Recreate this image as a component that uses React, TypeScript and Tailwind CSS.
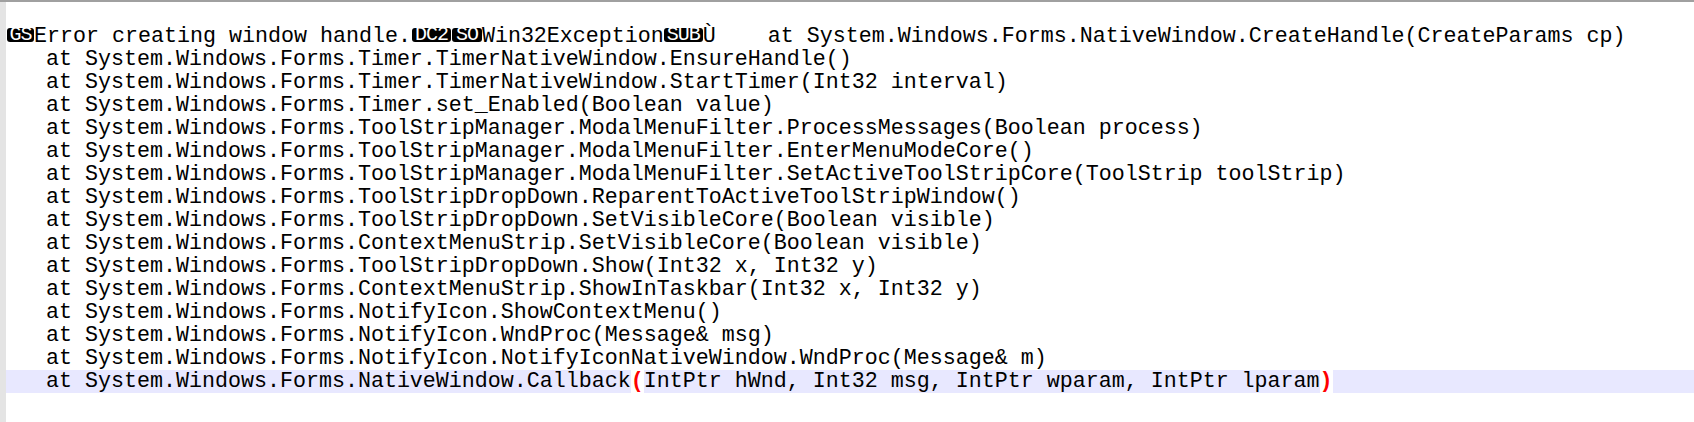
import React from 'react';

// Notepad++ style view of a .NET stack trace
const mono = { fontFamily: '"Liberation Mono", "Courier New", monospace' };

const lines = [
  '   at System.Windows.Forms.Timer.TimerNativeWindow.EnsureHandle()',
  '   at System.Windows.Forms.Timer.TimerNativeWindow.StartTimer(Int32 interval)',
  '   at System.Windows.Forms.Timer.set_Enabled(Boolean value)',
  '   at System.Windows.Forms.ToolStripManager.ModalMenuFilter.ProcessMessages(Boolean process)',
  '   at System.Windows.Forms.ToolStripManager.ModalMenuFilter.EnterMenuModeCore()',
  '   at System.Windows.Forms.ToolStripManager.ModalMenuFilter.SetActiveToolStripCore(ToolStrip toolStrip)',
  '   at System.Windows.Forms.ToolStripDropDown.ReparentToActiveToolStripWindow()',
  '   at System.Windows.Forms.ToolStripDropDown.SetVisibleCore(Boolean visible)',
  '   at System.Windows.Forms.ContextMenuStrip.SetVisibleCore(Boolean visible)',
  '   at System.Windows.Forms.ToolStripDropDown.Show(Int32 x, Int32 y)',
  '   at System.Windows.Forms.ContextMenuStrip.ShowInTaskbar(Int32 x, Int32 y)',
  '   at System.Windows.Forms.NotifyIcon.ShowContextMenu()',
  '   at System.Windows.Forms.NotifyIcon.WndProc(Message& msg)',
  '   at System.Windows.Forms.NotifyIcon.NotifyIconNativeWindow.WndProc(Message& m)',
];

const App = () => {
  return (
    <div className="h-[422px] w-full overflow-hidden bg-white border-t-2 border-[#a0a0a0] flex">
      <div className="w-[6px] shrink-0 bg-[#e4e4e4]" />
      <div
        className="flex-1 pt-[23px] text-[21.66px] leading-[23px] text-black whitespace-pre"
        style={mono}
      >
        <div className="h-[23px] pl-[1px]">
          <span className="inline-block align-top mt-[3px] w-[27px] h-[14px] leading-[14px] text-[20px] tracking-[-1px] text-white bg-black rounded-[3px] text-center">GS</span>
          Error creating window handle.
          <span className="inline-block align-top mt-[3px] ml-[1px] w-[39px] h-[14px] leading-[14px] text-[20px] tracking-[-1px] text-white bg-black rounded-[3px] text-center">DC2</span>
          <span className="inline-block align-top mt-[3px] ml-[1px] w-[30px] h-[14px] leading-[14px] text-[20px] tracking-[-1px] text-white bg-black rounded-[3px] text-center">SO</span>
          Win32Exception
          <span className="inline-block align-top mt-[3px] w-[39px] h-[14px] leading-[14px] text-[20px] tracking-[-1px] text-white bg-black rounded-[3px] text-center">SUB</span>
          {'Ù    at System.Windows.Forms.NativeWindow.CreateHandle(CreateParams cp)'}
        </div>
        {lines.map((line, i) => (
          <div key={i} className="h-[23px] pl-[1px]">
            {line}
          </div>
        ))}
        <div className="h-[23px] pl-[1px] bg-[#e8e8ff]">
          {'   at System.Windows.Forms.NativeWindow.Callback'}
          <span className="bg-white text-[#ff0000] font-bold">(</span>
          IntPtr hWnd, Int32 msg, IntPtr wparam, IntPtr lparam
          <span className="bg-white text-[#ff0000] font-bold">)</span>
        </div>
      </div>
    </div>
  );
};

export default App;
